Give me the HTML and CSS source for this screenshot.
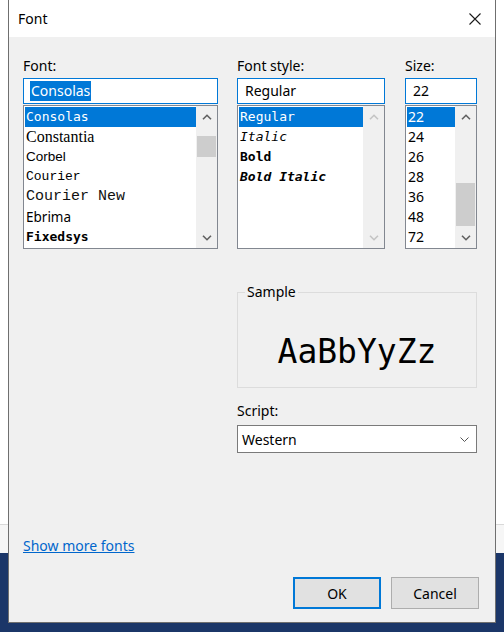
FILE: index.html
```html
<!DOCTYPE html>
<html>
<head>
<meta charset="utf-8">
<link rel="stylesheet" href="styles.css">
</head>
<body>
<div class="dialog">
  <div class="titlebar">
    <span class="title">Font</span>
    <svg class="close" width="12" height="12" viewBox="0 0 12 12"><path d="M0.5 0.5 L11.5 11.5 M11.5 0.5 L0.5 11.5" stroke="#1a1a1a" stroke-width="1.1" fill="none"/></svg>
  </div>
  <div class="content">
    <div class="cols">
      <div class="col col-font">
        <div class="label">Font:</div>
        <div class="input"><span class="sel">Consolas</span></div>
        <div class="list">
          <div class="items">
            <div class="item selected f-consolas">Consolas</div>
            <div class="item f-constantia">Constantia</div>
            <div class="item f-corbel">Corbel</div>
            <div class="item f-courier">Courier</div>
            <div class="item f-couriernew">Courier New</div>
            <div class="item f-ebrima">Ebrima</div>
            <div class="item f-fixedsys">Fixedsys</div>
          </div>
          <div class="scrollbar">
            <div class="sbtn"><svg width="10" height="6" viewBox="0 0 10 6"><path d="M1 5.3 L5 1.3 L9 5.3" stroke="#606060" stroke-width="1.6" fill="none"/></svg></div>
            <div class="track"><div class="thumb thumb-font"></div></div>
            <div class="sbtn"><svg width="10" height="6" viewBox="0 0 10 6"><path d="M1 0.7 L5 4.7 L9 0.7" stroke="#606060" stroke-width="1.6" fill="none"/></svg></div>
          </div>
        </div>
      </div>
      <div class="col col-style">
        <div class="label">Font style:</div>
        <div class="input"><span class="plain">Regular</span></div>
        <div class="list">
          <div class="items mono">
            <div class="item selected">Regular</div>
            <div class="item it">Italic</div>
            <div class="item bd">Bold</div>
            <div class="item bd it">Bold Italic</div>
          </div>
          <div class="scrollbar">
            <div class="sbtn"><svg width="10" height="6" viewBox="0 0 10 6"><path d="M1 5.3 L5 1.3 L9 5.3" stroke="#c4c4c4" stroke-width="1.6" fill="none"/></svg></div>
            <div class="track"></div>
            <div class="sbtn"><svg width="10" height="6" viewBox="0 0 10 6"><path d="M1 0.7 L5 4.7 L9 0.7" stroke="#c4c4c4" stroke-width="1.6" fill="none"/></svg></div>
          </div>
        </div>
      </div>
      <div class="col col-size">
        <div class="label">Size:</div>
        <div class="input"><span class="plain">22</span></div>
        <div class="list">
          <div class="items">
            <div class="item selected">22</div>
            <div class="item">24</div>
            <div class="item">26</div>
            <div class="item">28</div>
            <div class="item">36</div>
            <div class="item">48</div>
            <div class="item">72</div>
          </div>
          <div class="scrollbar">
            <div class="sbtn"><svg width="10" height="6" viewBox="0 0 10 6"><path d="M1 5.3 L5 1.3 L9 5.3" stroke="#606060" stroke-width="1.6" fill="none"/></svg></div>
            <div class="track"><div class="thumb thumb-size"></div></div>
            <div class="sbtn"><svg width="10" height="6" viewBox="0 0 10 6"><path d="M1 0.7 L5 4.7 L9 0.7" stroke="#606060" stroke-width="1.6" fill="none"/></svg></div>
          </div>
        </div>
      </div>
    </div>

    <div class="lower">
      <fieldset class="sample">
        <legend>Sample</legend>
        <div class="sample-text">AaBbYyZz</div>
      </fieldset>
      <div class="label script-label">Script:</div>
      <div class="select">
        <span>Western</span>
        <svg width="9" height="5" viewBox="0 0 9 5"><path d="M0.5 0.5 L4.5 4.5 L8.5 0.5" stroke="#555" stroke-width="1" fill="none"/></svg>
      </div>
    </div>

    <div class="link-row"><a class="link">Show more fonts</a></div>

    <div class="buttons">
      <div class="btn btn-default">OK</div>
      <div class="btn">Cancel</div>
    </div>
  </div>
</div>
</body>
</html>
```

FILE: styles.css
```css
* { box-sizing: border-box; }
html, body { margin: 0; padding: 0; }
body {
  width: 504px;
  height: 632px;
  overflow: hidden;
  background: linear-gradient(to bottom, #ffffff 0, #ffffff 524px, #d9d9d9 524px, #d9d9d9 525px, #f6f6f6 525px, #f6f6f6 553px, #1b3668 553px);
  font-family: "Noto Sans", "Open Sans", sans-serif;
  font-size: 14px;
  color: #000;
}
.dialog {
  margin-left: 8px;
  width: 488px;
  height: 623px;
  border: 1px solid #6f6f6f;
  border-top: none;
  background: #f0f0f0;
  display: flex;
  flex-direction: column;
}
.titlebar {
  height: 37px;
  flex: none;
  background: #fff;
  display: flex;
  align-items: center;
  justify-content: space-between;
  padding: 0 14px 0 9px;
}
.title { line-height: 20px; }
.close { display: block; margin-top: 1px; }

.content {
  padding: 19px 17px 0 14px;
  display: flex;
  flex-direction: column;
}
.cols { display: flex; }
.col-font { width: 195px; }
.col-style { width: 148px; margin-left: 19px; }
.col-size { width: 72px; margin-left: 20px; }

.label { height: 20px; line-height: 20px; white-space: nowrap; }
.input {
  margin-top: 2px;
  height: 26px;
  border: 1px solid #0078d7;
  background: #fff;
  display: flex;
  align-items: center;
  padding-left: 6px;
}
.sel {
  background: #0078d7;
  color: #fff;
  line-height: 20px;
  padding: 0 1px;
}
.plain { line-height: 20px; padding-left: 1px; }

.list {
  margin-top: 1px;
  height: 144px;
  border: 1px solid #828790;
  background: #fff;
  display: flex;
}
.items {
  flex: 1;
  min-width: 0;
  padding: 1px 0 0 1px;
}
.item {
  height: 20px;
  line-height: 20px;
  padding-left: 1px;
  white-space: nowrap;
  overflow: hidden;
}
.item.selected { background: #0078d7; color: #fff; }
.mono .item { font-family: "DejaVu Sans Mono", monospace; font-size: 13px; }
.it { font-style: italic; }
.bd { font-weight: bold; }

.f-consolas { font-family: "DejaVu Sans Mono", monospace; font-size: 13px; }
.f-constantia { font-family: "Liberation Serif", serif; font-size: 16px; }
.f-corbel { font-family: "Liberation Sans", sans-serif; font-size: 13.5px; }
.f-courier { font-family: "Liberation Mono", monospace; font-size: 13px; }
.f-couriernew { font-family: "Liberation Mono", monospace; font-size: 15px; color: #111; }
.f-ebrima { font-family: "Noto Sans", sans-serif; font-size: 13.5px; }
.f-fixedsys { font-family: "DejaVu Sans Mono", monospace; font-size: 13px; font-weight: bold; }

.scrollbar {
  width: 21px;
  flex: none;
  background: #f0f0f0;
  display: flex;
  flex-direction: column;
}
.sbtn {
  height: 21px;
  flex: none;
  display: flex;
  align-items: center;
  justify-content: center;
}
.sbtn svg { display: block; }
.track { flex: 1; }
.thumb { background: #cdcdcd; margin: 0 1px; }
.thumb-font { margin-top: 9px; height: 21px; }
.thumb-size { margin-top: 56px; height: 43px; }

.lower {
  margin-left: 214px;
  width: 240px;
  margin-top: 33px;
}
.sample {
  margin: 0;
  padding: 0;
  height: 106px;
  border: 1px solid #dcdcdc;
  min-width: 0;
}
.sample legend {
  padding: 0 2px;
  margin-left: 7px;
  line-height: 20px;
}
.sample-text {
  height: 94px;
  display: flex;
  align-items: center;
  justify-content: center;
  padding-top: 4px;
  font-family: "DejaVu Sans Mono", monospace;
  font-size: 33px;
}
.script-label { margin-top: 13px; }
.select {
  margin-top: 4px;
  height: 28px;
  border: 1px solid #7a7a7a;
  background: #fff;
  display: flex;
  align-items: center;
  justify-content: space-between;
  padding: 0 7px 0 4px;
}
.select svg { display: block; }

.link-row { margin-top: 83px; height: 20px; line-height: 20px; }
.link { color: #0066cc; text-decoration: underline; }

.buttons {
  margin-top: 21px;
  margin-right: -1px;
  display: flex;
  justify-content: flex-end;
  gap: 10px;
}
.btn {
  width: 88px;
  height: 32px;
  background: #e1e1e1;
  border: 1px solid #adadad;
  display: flex;
  align-items: center;
  justify-content: center;
}
.btn-default { border: 2px solid #0078d7; }
```
